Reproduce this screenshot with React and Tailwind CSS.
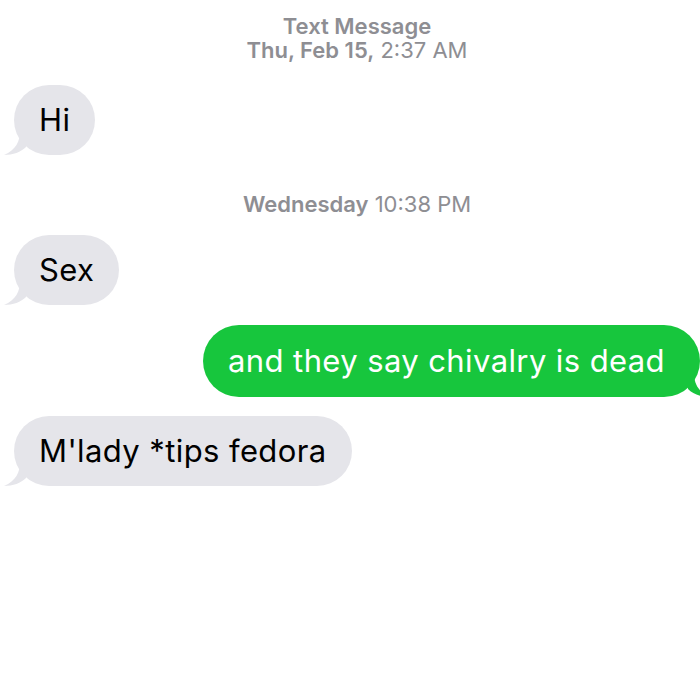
import React from 'react';

function Tail({ side, color }) {
    const right = side === 'right';
    return (
        <svg
            width="22"
            height="24"
            viewBox="0 0 22 24"
            className={right ? 'absolute -right-[10px] bottom-0' : 'absolute -left-[10px] bottom-0'}
            style={right ? { transform: 'scaleX(-1)' } : undefined}
        >
            <path d="M16 0 C16 10 12 19 0 24 C9 24 17 21 22 16 L22 0 Z" fill={color} />
        </svg>
    );
}

function Received({ text, className = '' }) {
    return (
        <div className={'flex ' + className}>
            <div className="relative ml-[14px] rounded-[36px] bg-[#e5e5ea] px-[25px] py-[17px] text-[31px] leading-[36px] tracking-[0.4px] text-black">
                {text}
                <Tail side="left" color="#e5e5ea" />
            </div>
        </div>
    );
}

function Sent({ text, className = '' }) {
    return (
        <div className={'flex justify-end ' + className}>
            <div className="relative rounded-[36px] bg-[#17c63d] pl-[25px] pr-[35px] py-[18px] text-[31px] leading-[36px] tracking-[0.4px] text-white">
                {text}
                <Tail side="right" color="#17c63d" />
            </div>
        </div>
    );
}

export default function App() {
    return (
        <div className="h-[700px] w-[700px] overflow-hidden bg-white font-['Inter','Liberation_Sans',sans-serif]">
            <div className="pl-[14px] pt-[14px] text-center text-[22px] leading-[24px] text-[#8e8e93]">
                <div className="font-semibold">Text Message</div>
                <div>
                    <span className="font-semibold">Thu, Feb 15,</span> 2:37 AM
                </div>
            </div>

            <Received text="Hi" className="mt-[23px]" />

            <div className="mt-[37px] pl-[14px] text-center text-[22px] leading-[24px] text-[#8e8e93]">
                <span className="font-semibold">Wednesday</span> 10:38 PM
            </div>

            <Received text="Sex" className="mt-[19px]" />

            <Sent text="and they say chivalry is dead" className="mt-[20px]" />

            <Received text="M'lady *tips fedora" className="mt-[19px]" />
        </div>
    );
}
